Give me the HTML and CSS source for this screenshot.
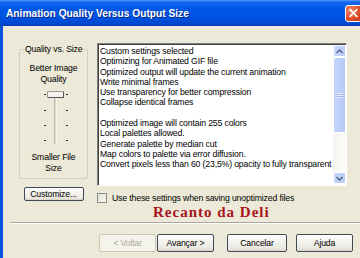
FILE: index.html
```html
<!DOCTYPE html>
<html lang="pt">
<head>
  <meta charset="UTF-8">
  <title>Animation Quality Versus Output Size</title>
  <link rel="stylesheet" href="styles.css">
</head>
<body>
  <div class="titlebar">
    <span class="title">Animation Quality Versus Output Size</span>
    <span class="close">
      <svg width="16" height="16" viewBox="0 0 16 16">
        <path d="M4.5 4.5 L11.5 11.5 M11.5 4.5 L4.5 11.5" stroke="#fff" stroke-width="1.8" stroke-linecap="square"/>
      </svg>
    </span>
  </div>
  <div class="content">
    <div class="main">
      <div class="left">
        <fieldset class="group">
          <legend>Quality vs. Size</legend>
          <div class="scale top">Better Image<br>Quality</div>
          <svg class="slider" width="32" height="60" viewBox="0 0 32 60">
            <!-- track groove -->
            <line x1="17" y1="8" x2="17" y2="57" stroke="#8a8a80" stroke-width="1"/>
            <line x1="18" y1="8" x2="18" y2="57" stroke="#ffffff" stroke-width="1"/>
            <!-- ticks -->
            <g stroke="#333" stroke-width="1">
              <line x1="6" y1="7.5" x2="8" y2="7.5"/>
              <line x1="6" y1="23.5" x2="8" y2="23.5"/>
              <line x1="6" y1="38.5" x2="8" y2="38.5"/>
              <line x1="6" y1="53.5" x2="8" y2="53.5"/>
              <line x1="28" y1="7.5" x2="30" y2="7.5"/>
              <line x1="28" y1="23.5" x2="30" y2="23.5"/>
              <line x1="28" y1="38.5" x2="30" y2="38.5"/>
              <line x1="28" y1="53.5" x2="30" y2="53.5"/>
            </g>
            <!-- thumb -->
            <rect x="9.5" y="4.5" width="16" height="6" fill="#f3f2ec" stroke="#9c9a8e"/>
            <line x1="10" y1="10.5" x2="26" y2="10.5" stroke="#555"/>
            <line x1="25.5" y1="5" x2="25.5" y2="11" stroke="#555"/>
          </svg>
          <div class="scale bottom">Smaller File<br>Size</div>
        </fieldset>
        <button class="btn customize">Customize...</button>
      </div>
      <div class="right">
        <div class="listbox">
          <div class="lines">
            <div>Custom settings selected</div>
            <div>Optimizing for Animated GIF file</div>
            <div>Optimized output will update the current animation</div>
            <div>Write minimal frames</div>
            <div>Use transparency for better compression</div>
            <div>Collapse identical frames</div>
            <div class="blank"></div>
            <div>Optimized image will contain 255 colors</div>
            <div>Local palettes allowed.</div>
            <div>Generate palette by median cut</div>
            <div>Map colors to palette via error diffusion.</div>
            <div>Convert pixels less than 60 (23,5%) opacity to fully transparent</div>
          </div>
          <div class="scrollbar">
            <div class="sb-btn">
              <svg width="7" height="5" viewBox="0 0 7 5"><path d="M0.5 4 L3.5 1 L6.5 4" fill="none" stroke="#4d6185" stroke-width="1.4"/></svg>
            </div>
            <div class="sb-thumb"><span class="grip"></span></div>
            <div class="sb-track"></div>
            <div class="sb-btn">
              <svg width="7" height="5" viewBox="0 0 7 5"><path d="M0.5 1 L3.5 4 L6.5 1" fill="none" stroke="#4d6185" stroke-width="1.4"/></svg>
            </div>
          </div>
        </div>
        <label class="check"><span class="box"></span>Use these settings when saving unoptimized files</label>
        <div class="watermark">Recanto da Deli</div>
      </div>
    </div>
    <div class="sep"></div>
    <div class="buttons">
      <button class="btn disabled">&lt; Voltar</button>
      <button class="btn next">Avançar &gt;</button>
      <button class="btn cancel">Cancelar</button>
      <button class="btn help">Ajuda</button>
    </div>
  </div>
</body>
</html>
```

FILE: styles.css
```css
body {
  margin: 0;
  width: 360px;
  height: 258px;
  overflow: hidden;
  background: #ece9d8;
  font-family: "Liberation Sans", Arial, sans-serif;
  font-size: 8.7px;
  letter-spacing: -0.15px;
  color: #000;
}
.titlebar {
  height: 26px;
  box-sizing: border-box;
  display: flex;
  align-items: center;
  padding-left: 6px;
  background: linear-gradient(#5a9cff 0, #1466ee 2px, #0058e6 8px, #0054e3 60%, #0049d2 90%, #003db8 100%);
}
.title {
  color: #fff;
  font-weight: bold;
  font-size: 10.2px;
  letter-spacing: 0;
  text-shadow: 1px 1px 0 #0a2a8a;
}
.close {
  margin-left: auto;
  margin-right: -2px;
  width: 17px;
  height: 17px;
  box-sizing: border-box;
  border: 1px solid #fff;
  border-radius: 3px;
  background: radial-gradient(circle at 30% 30%, #f08a6a, #e04a25 60%, #c5361a);
  display: flex;
  align-items: center;
  justify-content: center;
}
.content {
  height: 232px;
  box-sizing: border-box;
  border-left: 3px solid #0a52dd;
}
.main {
  height: 196px;
  box-sizing: border-box;
  display: flex;
  align-items: flex-start;
  padding: 17px 0 0 16px;
}
.left {
  width: 69px;
  padding-top: 1px;
  display: flex;
  flex-direction: column;
  align-items: center;
}
.group {
  margin: 0;
  padding: 0;
  width: 69px;
  height: 135px;
  box-sizing: border-box;
  border: 1px solid #d0d0bf;
  border-radius: 2px;
  display: flex;
  flex-direction: column;
  align-items: center;
}
.group legend {
  margin-left: 4px;
  padding: 0 1px;
  line-height: 10px;
  white-space: nowrap;
}
.scale {
  text-align: center;
  line-height: 11px;
}
.scale.top {
  margin-top: 9px;
}
.slider {
  display: block;
  margin: 2px 0 0 1px;
}
.scale.bottom {
  margin-top: 5px;
}
.btn {
  font-family: "Liberation Sans", Arial, sans-serif;
  font-size: 8.7px;
  letter-spacing: -0.15px;
  color: #000;
  padding: 0;
  height: 18px;
  box-sizing: border-box;
  border: 1px solid #3e4a56;
  border-radius: 2px;
  background: linear-gradient(#ffffff, #f3f2ee 40%, #ebe9e1 80%, #d8d4c8);
}
.customize {
  margin-top: 8px;
  width: 60px;
  height: 14px;
  line-height: 12px;
}
.right {
  width: 250px;
  margin-left: 9px;
}
.listbox {
  height: 143px;
  box-sizing: border-box;
  background: #fff;
  border: 1px solid;
  border-color: #7f7f7f #ffffff #ffffff #7f7f7f;
  box-shadow: inset 1px 1px 0 #404040;
  display: flex;
}
.lines {
  flex: 1;
  padding: 2px 0 0 2px;
  line-height: 10.3px;
  white-space: nowrap;
  overflow: hidden;
}
.lines .blank {
  height: 10.3px;
}
.scrollbar {
  width: 13px;
  margin: 1px 0 1px 0;
  display: flex;
  flex-direction: column;
  background: #f4f3ee;
}
.sb-btn {
  height: 12px;
  box-sizing: border-box;
  border: 1px solid #fff;
  border-radius: 2px;
  background: linear-gradient(90deg, #c8d6fa, #b9cbf6);
  display: flex;
  align-items: center;
  justify-content: center;
}
.sb-thumb {
  height: 76px;
  box-sizing: border-box;
  border: 1px solid #fff;
  border-radius: 2px;
  background: linear-gradient(90deg, #c6d5fb, #b4c8f7);
  display: flex;
  align-items: center;
  justify-content: center;
}
.grip {
  width: 6px;
  height: 5px;
  background: repeating-linear-gradient(#eef2fd 0 1px, #9fb4e8 1px 2px);
}
.sb-track {
  flex: 1;
  background: linear-gradient(90deg, #f4f3ee, #fdfdfb);
}
.check {
  display: flex;
  align-items: center;
  margin-top: 7px;
  height: 10px;
}
.box {
  width: 10px;
  height: 10px;
  box-sizing: border-box;
  border: 1px solid #8a8a86;
  background: linear-gradient(135deg, #dcdcd5, #fbfbf8);
  margin-right: 5px;
}
.watermark {
  margin: 2px 0 0 56px;
  font-family: "Liberation Serif", "Times New Roman", serif;
  font-weight: bold;
  font-size: 15px;
  line-height: 14px;
  letter-spacing: 1px;
  color: #a8141a;
}
.sep {
  margin-left: 7px;
  height: 1px;
  background: #aca899;
  border-bottom: 1px solid #fff;
}
.buttons {
  display: flex;
  padding: 10px 0 0 96px;
}
.buttons .btn {
  width: 57px;
}
.buttons .next {
  margin-left: 1px;
}
.buttons .cancel {
  width: 60px;
  margin-left: 13px;
}
.buttons .help {
  margin-left: 9px;
}
.btn.disabled {
  color: #aca899;
  border-color: #c9c7ba;
  background: #f5f4ea;
}
```
